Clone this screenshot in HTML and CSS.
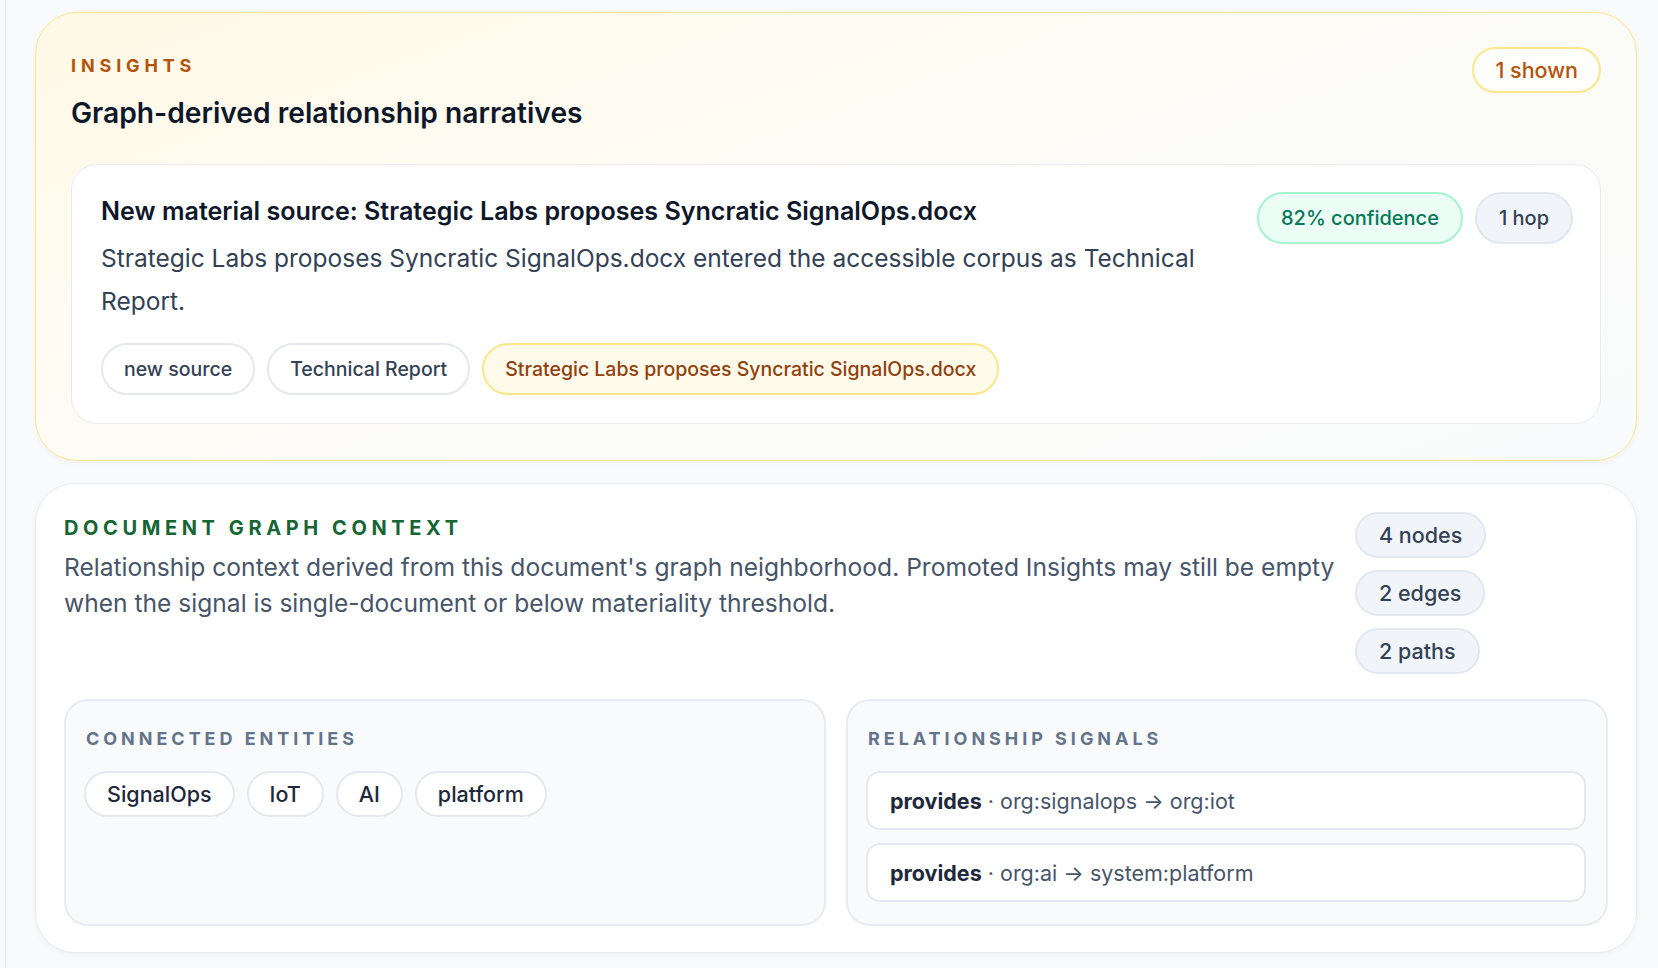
FILE: index.html
```html
<!DOCTYPE html>
<html lang="en">
<head>
<meta charset="utf-8">
<title>Insights</title>
<link rel="stylesheet" href="styles.css">
</head>
<body>
<div class="page">
  <section class="insights">
    <header class="insights-head">
      <div class="head-text">
        <div class="eyebrow eyebrow-amber">INSIGHTS</div>
        <h2 class="insights-title">Graph-derived relationship narratives</h2>
      </div>
      <span class="pill pill-shown">1 shown</span>
    </header>
    <article class="insight-card">
      <div class="insight-main">
        <h3 class="insight-title">New material source: Strategic Labs proposes Syncratic SignalOps.docx</h3>
        <p class="insight-body">Strategic Labs proposes Syncratic SignalOps.docx entered the accessible corpus as Technical Report.</p>
        <div class="tag-row">
          <span class="tag">new source</span>
          <span class="tag">Technical Report</span>
          <span class="tag tag-amber">Strategic Labs proposes Syncratic SignalOps.docx</span>
        </div>
      </div>
      <div class="insight-badges">
        <span class="badge badge-green">82% confidence</span>
        <span class="badge badge-slate">1 hop</span>
      </div>
    </article>
  </section>

  <section class="context">
    <header class="context-head">
      <div class="context-text">
        <div class="eyebrow eyebrow-green">DOCUMENT GRAPH CONTEXT</div>
        <p class="context-desc">Relationship context derived from this document's graph neighborhood. Promoted Insights may still be empty when the signal is single-document or below materiality threshold.</p>
      </div>
      <div class="stats">
        <span class="stat">4 nodes</span>
        <span class="stat">2 edges</span>
        <span class="stat">2 paths</span>
      </div>
    </header>
    <div class="panels">
      <div class="panel">
        <div class="panel-label">CONNECTED ENTITIES</div>
        <div class="entity-row">
          <span class="entity">SignalOps</span>
          <span class="entity">IoT</span>
          <span class="entity">AI</span>
          <span class="entity">platform</span>
        </div>
      </div>
      <div class="panel">
        <div class="panel-label">RELATIONSHIP SIGNALS</div>
        <div class="signal-list">
          <div class="signal"><strong>provides</strong> · org:signalops → org:iot</div>
          <div class="signal"><strong>provides</strong> · org:ai → system:platform</div>
        </div>
      </div>
    </div>
  </section>
</div>
</body>
</html>
```

FILE: styles.css
```css
* { box-sizing: border-box; }

html, body {
  margin: 0;
  padding: 0;
}

body {
  background: #f8fafc;
  font-family: Inter, "Noto Sans", "Liberation Sans", sans-serif;
  color: #0f172a;
}

.page {
  margin-left: 5px;
  border-left: 1px solid #e5e7eb;
  padding: 12px 21px 18px 29px;
  min-height: 968px;
  display: flex;
  flex-direction: column;
  gap: 22px;
}

/* ---------- Insights card ---------- */
.insights {
  border: 1px solid #fde68a;
  border-radius: 42px;
  padding: 34px 35px 36px 35px;
  background: linear-gradient(160deg, #fff9e6 0%, #fffbf0 28%, #fbfbf8 55%, #f9fafb 100%);
  box-shadow: 0 2px 6px rgba(15, 23, 42, 0.04);
}

.insights-head {
  display: flex;
  justify-content: space-between;
  align-items: flex-start;
}

.head-text {
  padding-top: 8px;
}

.eyebrow {
  font-weight: 700;
  text-transform: uppercase;
}

.eyebrow-amber {
  color: #b45309;
  font-size: 18px;
  line-height: 22px;
  letter-spacing: 0.27em;
}

.insights-title {
  margin: 19px 0 0;
  font-size: 28.2px;
  line-height: 34px;
  font-weight: 600;
  color: #0f172a;
}

.pill {
  display: inline-flex;
  align-items: center;
  border-radius: 999px;
  white-space: nowrap;
}

.pill-shown {
  height: 46px;
  padding: 0 21px;
  border: 2px solid #fde68a;
  background: rgba(255, 255, 255, 0.7);
  color: #b45309;
  font-size: 21.5px;
  font-weight: 500;
}

.insight-card {
  margin-top: 34px;
  background: #ffffff;
  border: 1px solid #e8ebef;
  border-radius: 26px;
  padding: 27px 27px 28px 29px;
  display: flex;
  align-items: flex-start;
  gap: 24px;
}

.insight-main {
  flex: 1;
  min-width: 0;
}

.insight-title {
  margin: 3px 0 0;
  font-size: 25.1px;
  line-height: 32px;
  font-weight: 600;
  color: #0f172a;
}

.insight-body {
  margin: 10px 0 0;
  font-size: 24.5px;
  line-height: 43px;
  color: #334155;
}

.tag-row {
  margin-top: 20px;
  display: flex;
  flex-wrap: wrap;
  gap: 12px;
}

.tag {
  display: inline-flex;
  align-items: center;
  height: 52px;
  padding: 0 21px;
  border-radius: 999px;
  border: 2px solid #e5e8ee;
  background: #ffffff;
  color: #334155;
  font-size: 19.5px;
  font-weight: 500;
  white-space: nowrap;
}

.tag-amber {
  background: #fffbeb;
  border-color: #fde68a;
  color: #92400e;
}

.insight-badges {
  flex: none;
  display: flex;
  gap: 12px;
}

.badge {
  display: inline-flex;
  align-items: center;
  height: 52px;
  padding: 0 22px;
  border-radius: 999px;
  font-size: 20px;
  font-weight: 500;
  white-space: nowrap;
}

.badge-green {
  background: #ecfdf5;
  border: 2px solid #a7f3d0;
  color: #047857;
}

.badge-slate {
  background: #f1f5f9;
  border: 2px solid #e2e8f0;
  color: #334155;
}

/* ---------- Context card ---------- */
.context {
  background: #ffffff;
  border: 1px solid #e8ebef;
  border-radius: 40px;
  padding: 28px 28px 26px 28px;
  box-shadow: 0 2px 6px rgba(15, 23, 42, 0.04);
}

.context-head {
  display: flex;
  align-items: flex-start;
  gap: 10px;
}

.context-text {
  flex: 1;
  min-width: 0;
  padding-top: 3px;
}

.eyebrow-green {
  color: #166534;
  font-size: 20px;
  line-height: 26px;
  letter-spacing: 0.23em;
}

.context-desc {
  margin: 8px 0 0;
  font-size: 24.6px;
  line-height: 36px;
  color: #475569;
}

.stats {
  flex: none;
  width: 253px;
  display: flex;
  flex-direction: column;
  align-items: flex-start;
  gap: 12px;
}

.stat {
  display: inline-flex;
  align-items: center;
  height: 46px;
  padding: 0 22px;
  border-radius: 999px;
  background: #f1f5f9;
  border: 2px solid #e2e8f0;
  color: #334155;
  font-size: 21.5px;
  font-weight: 500;
  white-space: nowrap;
}

.panels {
  margin-top: 25px;
  display: grid;
  grid-template-columns: 1fr 1fr;
  gap: 20px;
}

.panel {
  background: #f8fafc;
  border: 2px solid #e8ebef;
  border-radius: 24px;
  padding: 26px 20px 22px 18px;
}

.panel-label {
  color: #64748b;
  font-size: 18px;
  line-height: 24px;
  font-weight: 700;
  letter-spacing: 0.22em;
  padding-left: 2px;
}

.entity-row {
  margin-top: 20px;
  display: flex;
  flex-wrap: wrap;
  gap: 12px;
}

.entity {
  display: inline-flex;
  align-items: center;
  height: 46px;
  padding: 0 21px;
  border-radius: 999px;
  background: #ffffff;
  border: 2px solid #e5e8ee;
  color: #1e293b;
  font-size: 21.5px;
  font-weight: 500;
  white-space: nowrap;
}

.signal-list {
  margin-top: 20px;
  display: flex;
  flex-direction: column;
  gap: 13px;
}

.signal {
  height: 59px;
  display: flex;
  align-items: center;
  padding: 0 22px;
  background: #ffffff;
  border: 2px solid #e5e8ee;
  border-radius: 14px;
  color: #475569;
  font-size: 21.5px;
  white-space: pre;
}

.signal strong {
  color: #1e293b;
  font-weight: 700;
}
```
